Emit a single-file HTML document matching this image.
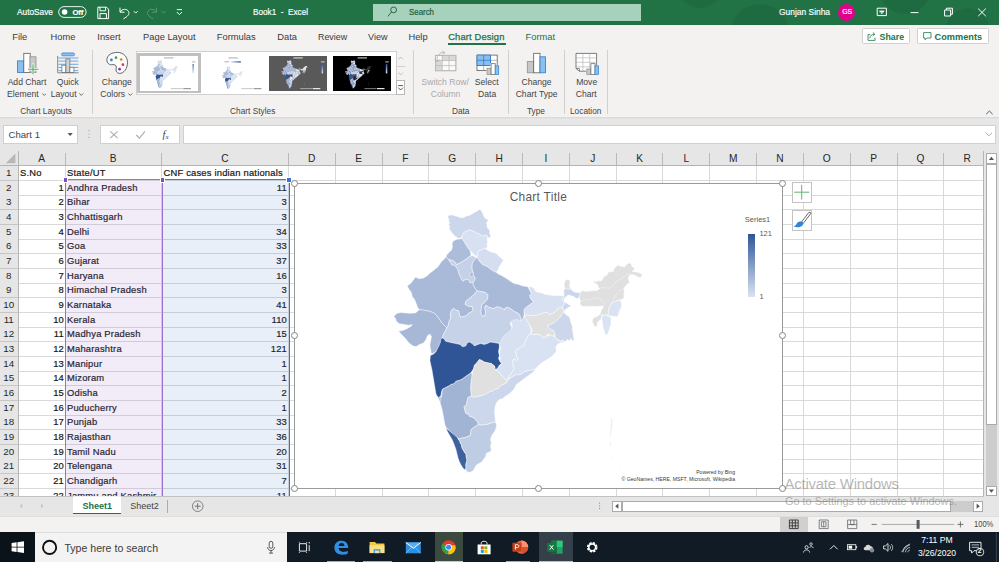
<!DOCTYPE html>
<html><head><meta charset="utf-8"><title>Book1 - Excel</title>
<style>
*{box-sizing:border-box;margin:0;padding:0}
html,body{width:999px;height:562px;overflow:hidden;background:#fff}
body{font-family:"Liberation Sans",sans-serif;position:relative;color:#262626}
.abs{position:absolute}
#title{position:absolute;left:0;top:0;width:999px;height:25px;background:#217346;color:#fff;font-size:9.8px;overflow:hidden}
#title .t{position:absolute;top:6.3px;white-space:nowrap;line-height:12px;-webkit-text-stroke:0.18px currentColor}
.sx{transform-origin:0 50%;transform:scaleX(var(--k,1))}
#tabs{position:absolute;left:0;top:25px;width:999px;height:23px;background:#f3f2f1;font-size:9.35px;color:#3b3a39}
#tabs .t{position:absolute;top:5.7px;white-space:nowrap;line-height:12px}
#ribbon{position:absolute;left:0;top:48px;width:999px;height:69px;background:#f3f2f1;font-size:8.6px;color:#3b3a39}
#ribbon .t{position:absolute;white-space:nowrap;line-height:11.5px;text-align:center}
#ribbon .g{position:absolute;top:53.5px;white-space:nowrap;font-size:8.3px;color:#444;line-height:11px;text-align:center}
#ribbon .sep{position:absolute;top:3px;width:1px;height:62px;background:#d2d0ce}
#rshadow{position:absolute;left:0;top:117px;width:999px;height:4px;background:linear-gradient(#d8d7d6,#e9e8e7 60%,#e6e6e6)}
#fbar{position:absolute;left:0;top:121px;width:999px;height:30px;background:#e6e6e6}
#fbar .box{position:absolute;top:4.3px;height:18.6px;background:#fff;border:0.7px solid #d0d0d0}
#gridbg{position:absolute;left:0;top:151px;width:984px;height:345.4px;background:#fff;overflow:hidden}
#sheet{position:absolute;left:0;top:0;width:999px;height:496.4px;overflow:hidden;pointer-events:none}
.ch{position:absolute;top:151px;height:14.6px;background:#e6e6e6;color:#262626;font-size:10.2px;text-align:center;line-height:16.6px;overflow:hidden}
.chl{position:absolute;top:153px;width:0.8px;height:12px;background:#b9b9b9}
.vl{position:absolute;top:166px;width:0.8px;height:331px;background:#d9d9d9}
.hl{position:absolute;left:18.4px;width:966px;height:0.8px;background:#d9d9d9}
.rh{position:absolute;left:0;width:18.4px;height:14.67px;background:#e6e6e6;color:#262626;font-size:9.8px;text-align:center;line-height:14px;padding-right:1px;letter-spacing:-0.1px}
.rhl{position:absolute;left:0;width:18.4px;height:0.8px;background:#c6c6c6}
.ct{position:absolute;height:14.67px;line-height:14px;font-size:9.4px;color:#111;white-space:nowrap;letter-spacing:0.2px;-webkit-text-stroke:0.2px #222}
.ct.r{text-align:right}
#tabbar{position:absolute;left:0;top:495px;width:999px;height:21px;background:#e6e6e6;clip-path:inset(1.3px 0 0 0)}
#status{position:absolute;left:0;top:516px;width:999px;height:17px;background:#f3f2f1}
#task{position:absolute;left:0;top:533px;width:999px;height:29px;background:#101a24}
</style></head><body>
<div id="title">
 <div class="t sx" style="left:16.8px;--k:.845">AutoSave</div>
 <div class="t sx" style="left:252.6px;--k:.835">Book1&nbsp; -&nbsp; Excel</div>
 <div class="abs" style="left:372.8px;top:4px;width:268.4px;height:17px;background:#a6d1ba"></div>
 <div class="t sx" style="left:409.2px;color:#1d5b3a;--k:.805">Search</div>
 <div class="t sx" style="left:778.7px;--k:.86">Gunjan Sinha</div>
 <div class="abs" style="left:838.1px;top:3.7px;width:17.4px;height:17.4px;border-radius:50%;background:#e3008c"></div>
 <div class="t" style="left:842.3px;top:7.2px;font-size:6.8px;letter-spacing:-.1px;line-height:10px">GS</div>
 <svg class="abs" style="left:0;top:0" width="999" height="25" viewBox="0 0 999 25">
  <g opacity="0.06" fill="#000"><circle cx="760" cy="34" r="30"/><circle cx="905" cy="-12" r="26"/><circle cx="968" cy="30" r="22"/><circle cx="700" cy="-14" r="22"/></g>
  <rect x="58.7" y="6.6" width="27.4" height="10.8" rx="5.4" fill="none" stroke="#fff" stroke-width="0.9"/>
  <circle cx="64.6" cy="12" r="2.8" fill="#fff"/>
  <g fill="none" stroke="#fff" stroke-width="1">
   <path d="M97.8 7.2H106.6L108.6 9.2V18.6H97.8Z"/><path d="M100 7.2V10.8H105.6V7.2"/><path d="M100 18.6V13.6H106.4V18.6"/>
   <path d="M120 7.6V12.2H124.6"/><path d="M120.2 12C122 8.6 127 8.4 128.6 11.6C129.8 14.2 127.6 16.6 123.4 18.8"/>
   <path d="M133.8 11.2L135.7 13.1L137.6 11.2"/>
   <path d="M176.8 9.6H182" stroke-width="0.9"/><path d="M176.8 12L179.4 14.6L182 12"/>
   <path d="M877.2 8.2H886.4V15.6H877.2Z"/><path d="M879.4 11.4H884.2" stroke-width="1.6"/><path d="M880.3 12.6L881.8 14.2L883.3 12.6Z" fill="#fff" stroke="none"/>
   <path d="M910.6 12.6H918.4"/>
   <path d="M944.6 10H950.6V16H944.6Z"/><path d="M946.4 10V8.2H952.4V14.2H950.6"/>
   <path d="M978.2 8.6L985.8 16.2M985.8 8.6L978.2 16.2"/>
  </g>
  <g fill="none" stroke="#5f9c7e" stroke-width="0.9">
   <path d="M156.4 7.6V12.2H151.8"/><path d="M156.2 12C154.4 8.6 149.4 8.4 147.8 11.6C146.6 14.2 148.8 16.6 153 18.8"/>
   <path d="M161.8 11.2L163.7 13.1L165.6 11.2"/>
  </g>
  <circle cx="393.6" cy="9.9" r="2.9" fill="none" stroke="#1d5b3a" stroke-width="0.9"/><path d="M391.6 12L387.8 16.4" stroke="#1d5b3a" stroke-width="0.9"/>
 </svg>
 <div class="t" style="left:72.4px;top:7.5px;font-size:7.7px;font-weight:bold;line-height:9px;letter-spacing:-.15px">Off</div>
</div>
<div id="tabs">
 <div class="t" style="left:12.2px">File</div>
 <div class="t" style="left:50.5px">Home</div>
 <div class="t" style="left:97.3px">Insert</div>
 <div class="t" style="left:143px">Page Layout</div>
 <div class="t" style="left:216.8px">Formulas</div>
 <div class="t" style="left:277.2px">Data</div>
 <div class="t sx" style="left:318.4px;--k:.95">Review</div>
 <div class="t sx" style="left:368px;--k:.97">View</div>
 <div class="t" style="left:408.4px">Help</div>
 <div class="t" style="left:448.2px;color:#217346;letter-spacing:.15px;-webkit-text-stroke:0.25px #217346">Chart Design</div>
 <div class="abs" style="left:448.2px;top:18.2px;width:58px;height:2.1px;background:#217346"></div>
 <div class="t" style="left:525.5px;color:#217346">Format</div>
 <div class="abs" style="left:861.7px;top:2.5px;width:48.8px;height:16.6px;background:#fff;border:0.7px solid #d2d0ce;border-radius:1.5px"></div>
 <div class="t" style="left:879.6px;color:#217346;font-weight:bold;font-size:8.8px">Share</div>
 <div class="abs" style="left:917.4px;top:2.5px;width:72px;height:16.6px;background:#fff;border:0.7px solid #d2d0ce;border-radius:1.5px"></div>
 <div class="t" style="left:934.6px;color:#217346;font-weight:bold;font-size:9.2px">Comments</div>
 <svg class="abs" style="left:0;top:0" width="999" height="23" viewBox="0 25 999 23"><g fill="none" stroke="#217346" stroke-width="0.8">
  <path d="M870.2 34.6H868V40.4H875V37.6"/><path d="M869.8 38.2C870 35.6 872 34.2 874.2 34.2M872.8 32.4L874.8 34.2L872.8 36"/>
  <path d="M923.6 32.6H931V38H927L925 39.8V38H923.6Z"/>
 </g></svg>
</div>
<div id="ribbon">
<div class="t" style="left:-13.0px;top:29.4px;width:80px;color:#444">Add Chart</div>
<div class="t" style="left:-13.4px;top:41.2px;width:80px;color:#444">Element <svg width="4.6" height="3" viewBox="0 0 4.6 3" style="margin-left:0.5px;vertical-align:1.2px"><path d="M0.4 0.5 L2.3 2.4 L4.2 0.5" fill="none" stroke="#444" stroke-width="0.8"/></svg></div>
<div class="t" style="left:27.8px;top:29.4px;width:80px;color:#444">Quick</div>
<div class="t" style="left:27.4px;top:41.2px;width:80px;color:#444">Layout <svg width="4.6" height="3" viewBox="0 0 4.6 3" style="margin-left:0.5px;vertical-align:1.2px"><path d="M0.4 0.5 L2.3 2.4 L4.2 0.5" fill="none" stroke="#444" stroke-width="0.8"/></svg></div>
<div class="t" style="left:76.8px;top:29.4px;width:80px;color:#444">Change</div>
<div class="t" style="left:76.5px;top:41.2px;width:80px;color:#444">Colors <svg width="4.6" height="3" viewBox="0 0 4.6 3" style="margin-left:0.5px;vertical-align:1.2px"><path d="M0.4 0.5 L2.3 2.4 L4.2 0.5" fill="none" stroke="#444" stroke-width="0.8"/></svg></div>
<div class="t" style="left:405.2px;top:29.4px;width:80px;color:#a9a9a9">Switch Row/</div>
<div class="t" style="left:405.6px;top:41.2px;width:80px;color:#a9a9a9">Column</div>
<div class="t" style="left:446.8px;top:29.4px;width:80px;color:#444">Select</div>
<div class="t" style="left:447.2px;top:41.2px;width:80px;color:#444">Data</div>
<div class="t" style="left:496.5px;top:29.4px;width:80px;color:#444">Change</div>
<div class="t" style="left:496.6px;top:41.2px;width:80px;color:#444">Chart Type</div>
<div class="t" style="left:546.7px;top:29.4px;width:80px;color:#444">Move</div>
<div class="t" style="left:546.2px;top:41.2px;width:80px;color:#444">Chart</div>
<div class="g" style="left:6.1px;top:58.4px;width:80px">Chart Layouts</div>
<div class="g" style="left:212.7px;top:58.4px;width:80px">Chart Styles</div>
<div class="g" style="left:420.7px;top:58.4px;width:80px">Data</div>
<div class="g" style="left:496.0px;top:58.4px;width:80px">Type</div>
<div class="g" style="left:545.7px;top:58.4px;width:80px">Location</div>
<div class="sep" style="left:92.1px;top:2.3px;height:63.6px"></div>
<div class="sep" style="left:413.2px;top:2.3px;height:63.6px"></div>
<div class="sep" style="left:507.5px;top:2.3px;height:63.6px"></div>
<div class="sep" style="left:564.3px;top:2.3px;height:63.6px"></div>
<div class="sep" style="left:607.2px;top:2.3px;height:63.6px"></div>
<div class="abs" style="left:136.3px;top:3.3px;width:269px;height:44px;background:#fff;border:0.7px solid #d0d0d0"></div>
<div class="abs" style="left:136.9px;top:5.1px;width:64px;height:40.2px;background:#c0c0c0"></div>
<div class="abs" style="left:139.8px;top:7.9px;width:58.4px;height:35px;background:#fff"></div>
<div class="abs" style="left:269.2px;top:8.3px;width:57.7px;height:34.4px;background:#595959"></div>
<div class="abs" style="left:333.4px;top:8.3px;width:57.7px;height:34.4px;background:#000"></div>
<div class="abs" style="left:395.6px;top:3.3px;width:9.7px;height:44px;background:#f3f2f1;border-left:0.7px solid #d0d0d0"></div>
<div class="abs" style="left:395.6px;top:17.6px;width:9.7px;height:0.7px;background:#d0d0d0"></div>
<div class="abs" style="left:395.6px;top:32.2px;width:9.7px;height:15.1px;background:#fff;border:0.7px solid #b8b8b8"></div>
<svg class="abs" style="left:0;top:0" width="999" height="69" viewBox="0 48 999 69">
<rect x="17.4" y="60.9" width="6.6" height="11.6" fill="#8cc0ec" stroke="#2b7cd3" stroke-width="0.8"/>
<rect x="23.8" y="53.3" width="6.4" height="19.2" fill="#fff" stroke="#5c5c5c" stroke-width="0.8"/>
<rect x="30.0" y="56.8" width="6.0" height="15.7" fill="#c8c8c8" stroke="#8f8f8f" stroke-width="0.8"/>
<path d="M33 63.6V74.4M27.6 69.2H38.6" stroke="#fff" stroke-width="2.4" fill="none"/>
<path d="M33 64.2V74.2M28 69.2H38.5" stroke="#4fa860" stroke-width="1.1" fill="none"/>
<rect x="61.6" y="52.9" width="12.9" height="2.9" rx="1.2" fill="#8cc0ec" stroke="#2b7cd3" stroke-width="0.7"/>
<path d="M58.5 58H78.3M58.5 61.1H78.3M58.5 64.3H78.3M58.5 67.5H78.3M58.5 70.6H78.3" stroke="#4a97e0" stroke-width="0.8"/>
<rect x="61.9" y="65.2" width="4" height="7.4" fill="#fff" stroke="#6a6a6a" stroke-width="0.7"/>
<rect x="65.9" y="58.9" width="4" height="13.7" fill="#d2d2d2" stroke="#6a6a6a" stroke-width="0.7"/>
<rect x="69.9" y="67.2" width="4" height="5.4" fill="#fff" stroke="#6a6a6a" stroke-width="0.7"/>
<path d="M57.7 55.9V72.8H78.6" stroke="#6a6a6a" stroke-width="0.8" fill="none"/>
<path d="M106.9 59.6C107.2 54.8 112 52.4 117.4 52.4C123.6 52.4 127.5 57 127.5 62.4C127.5 68.8 123.8 73.4 119.6 73.4C116.6 73.4 115.6 71 116.2 68.8C116.9 66.2 115.4 64.2 112.8 64.6C109.6 65.2 106.7 63.4 106.9 59.6Z" fill="#fcfcfc" stroke="#4b4b4b" stroke-width="0.85"/>
<circle cx="111.4" cy="59.9" r="1.35" fill="#2f7fd6"/>
<circle cx="116" cy="57.7" r="1.35" fill="#3aa655"/>
<circle cx="121.2" cy="59.5" r="1.35" fill="#f07c1a"/>
<circle cx="122.9" cy="64.7" r="1.35" fill="#e23b3b"/>
<circle cx="119.6" cy="69.2" r="1.35" fill="#8b2fb8"/>
<rect x="435.4" y="55.3" width="20.5" height="15.5" fill="#fafafa" stroke="#b5b5b5" stroke-width="0.7"/>
<rect x="435.4" y="60.5" width="6.8" height="10.3" fill="#d9d9d9"/><rect x="442.2" y="55.3" width="13.7" height="5.2" fill="#d9d9d9"/>
<path d="M442.2 55.3V70.8M449 55.3V70.8M435.4 60.5H455.9M435.4 65.6H455.9" stroke="#b5b5b5" stroke-width="0.7" fill="none"/>
<rect x="435.4" y="55.3" width="20.5" height="15.5" fill="none" stroke="#b0b0b0" stroke-width="0.7"/>
<path d="M437.2 61.8V57.2M434.6 59.4L437.2 62L439.8 59.4M437.2 57.2L440.8 52.6H444.6M442.6 50.6L444.8 52.6L442.6 54.8" stroke="#b0b0b0" stroke-width="0.8" fill="none"/>
<rect x="477" y="55.1" width="20.2" height="15.5" fill="#fff" stroke="#5c5c5c" stroke-width="0.8"/>
<rect x="477" y="55.1" width="13.5" height="10.4" fill="#8cc0ec"/>
<path d="M483.7 55.1V65.5M490.5 55.1V65.5M477 60.3H490.5M477 65.5H490.5" stroke="#2b7cd3" stroke-width="0.8" fill="none"/>
<path d="M477 55.1H490.5V65.5H477Z" stroke="#2b7cd3" stroke-width="0.8" fill="none"/>
<path d="M490.5 60.3H497.2M483.7 65.5V70.6" stroke="#8a8a8a" stroke-width="0.6" fill="none"/>
<path d="M486.2 67.4H490.3V62.9H496V65H499.5V75.2H486.2Z" fill="#f3f2f1"/>
<rect x="487" y="68.2" width="4.1" height="6.2" fill="#c8c8c8" stroke="#8f8f8f" stroke-width="0.7"/>
<rect x="491.1" y="63.7" width="4.1" height="10.7" fill="#fff" stroke="#5c5c5c" stroke-width="0.7"/>
<rect x="495.2" y="65.8" width="3.5" height="8.6" fill="#8cc0ec" stroke="#2b7cd3" stroke-width="0.7"/>
<rect x="527.3" y="61.6" width="6.4" height="11.2" fill="#c8c8c8" stroke="#8f8f8f" stroke-width="0.8"/>
<rect x="533.7" y="53.3" width="6.3" height="19.5" fill="#fff" stroke="#5c5c5c" stroke-width="0.8"/>
<rect x="540" y="56.8" width="5.6" height="16" fill="#8cc0ec" stroke="#2b7cd3" stroke-width="0.8"/>
<path d="M576 53.4H596.6V71.2H579.4L576 68.4Z" fill="#fff" stroke="#5c5c5c" stroke-width="0.8"/>
<path d="M582.9 53.4V71.2M589.7 53.4V71.2M576 57.9H596.6M576 62.3H596.6M576 66.8H596.6" stroke="#ababab" stroke-width="0.6" fill="none"/>
<path d="M576 68.4H579.4V71.2" stroke="#5c5c5c" stroke-width="0.7" fill="none"/>
<path d="M586 68.2H590.1V62.9H595.8V65H599.3V75.2H586Z" fill="#f3f2f1"/>
<rect x="586.8" y="69" width="4.1" height="5.4" fill="#c8c8c8" stroke="#8f8f8f" stroke-width="0.7"/>
<rect x="590.9" y="63.7" width="4.1" height="10.7" fill="#fff" stroke="#5c5c5c" stroke-width="0.7"/>
<rect x="595" y="65.8" width="3.5" height="8.6" fill="#8cc0ec" stroke="#2b7cd3" stroke-width="0.7"/>
<path d="M398.4 59.4L400.6 57.2L402.8 59.4" stroke="#b0b0b0" stroke-width="0.8" fill="none"/>
<path d="M398.4 72.6L400.6 74.8L402.8 72.6" stroke="#b0b0b0" stroke-width="0.8" fill="none"/>
<path d="M398.2 85.6H403M398.2 87.6L400.6 90L403 87.6" stroke="#444" stroke-width="0.9" fill="none"/>
<path d="M986.2 114.2L989.4 111L992.6 114.2" stroke="#444" stroke-width="0.9" fill="none"/>
<g transform="translate(151.70,60.10) scale(0.1075) translate(-393,-209)" ><use href="#india"/></g>
<g transform="translate(221.80,66.40) scale(0.086) translate(-393,-209)" ><use href="#india"/></g>
<g transform="translate(281.10,60.10) scale(0.1075) translate(-393,-209)" style="--g:#e8e4da;--s:#e8e8e8"><use href="#india"/></g>
<g transform="translate(344.90,60.10) scale(0.1075) translate(-393,-209)" style="--g:#2a2a2a;--s:#ddd"><use href="#india"/></g>
<rect x="164.0" y="57.3" width="9.4" height="1.2" fill="#b9b9b9"/>
<rect x="170.8" y="88.2" width="12" height="0.9" fill="#9a9a9a" opacity="0.6"/><rect x="183.3" y="88" width="7.6" height="1.2" fill="#9a9a9a"/>
<rect x="228.5" y="57.3" width="9.4" height="1.2" fill="#b9b9b9"/>
<rect x="241.3" y="88.2" width="12" height="0.9" fill="#9a9a9a" opacity="0.6"/><rect x="253.8" y="88" width="7.6" height="1.2" fill="#9a9a9a"/>
<rect x="293.4" y="57.3" width="9.4" height="1.2" fill="#cfcfcf"/>
<rect x="300.2" y="88.2" width="12" height="0.9" fill="#e8e8e8" opacity="0.6"/><rect x="312.7" y="88" width="7.6" height="1.2" fill="#e8e8e8"/>
<rect x="357.6" y="57.3" width="9.4" height="1.2" fill="#bdbdbd"/>
<rect x="364.4" y="88.2" width="12" height="0.9" fill="#e8e8e8" opacity="0.6"/><rect x="376.9" y="88" width="7.6" height="1.2" fill="#e8e8e8"/>
<defs><linearGradient id="lg" x1="0" y1="0" x2="0" y2="1"><stop offset="0" stop-color="#2f5597"/><stop offset="1" stop-color="#dae3f3"/></linearGradient><linearGradient id="lgh" x1="0" y1="0" x2="1" y2="0"><stop offset="0" stop-color="#dae3f3"/><stop offset="1" stop-color="#2f5597"/></linearGradient></defs>
<rect x="192.4" y="64" width="1.5" height="9.4" fill="url(#lg)" opacity="0.75"/><rect x="191.8" y="61.4" width="3.6" height="1" fill="#b0b0b0"/>
<rect x="231" y="61.2" width="9.8" height="1.4" fill="url(#lgh)"/><rect x="224.5" y="61.3" width="4.6" height="1" fill="#b0b0b0"/>
<rect x="321.6" y="64" width="1.5" height="9.4" fill="url(#lg)"/><rect x="321" y="61.4" width="3.6" height="1" fill="#d8d8d8"/>
<rect x="385.8" y="64" width="1.5" height="9.4" fill="url(#lg)"/><rect x="385.2" y="61.4" width="3.6" height="1" fill="#bdbdbd"/>
</svg>
</div>
<div id="rshadow"></div>
<div id="fbar">
 <div class="box" style="left:3px;width:75px"></div>
 <div class="abs" style="left:8.5px;top:8px;font-size:9.6px;line-height:12px;color:#444">Chart 1</div>
 <div class="box" style="left:100px;width:80px"></div>
 <div class="box" style="left:182.5px;width:813px"></div>
<svg class="abs" style="left:0;top:0" width="999" height="30" viewBox="0 121 999 30">
<path d="M67.6 133L70.2 136L72.8 133Z" fill="#555"/>
<circle cx="89" cy="130.6" r="0.6" fill="#9a9a9a"/><circle cx="89" cy="134" r="0.6" fill="#9a9a9a"/><circle cx="89" cy="137.4" r="0.6" fill="#9a9a9a"/>
<path d="M110.3 131.3L117.6 138.2M117.6 131.3L110.3 138.2" stroke="#adadad" stroke-width="1.1" fill="none"/>
<path d="M136.2 135L139.4 138.2L144.9 131.3" stroke="#adadad" stroke-width="1.1" fill="none"/>
<path d="M985.8 132.8L988.9 135.8L992 132.8" stroke="#9a9a9a" stroke-width="0.8" fill="none"/>
</svg>
<div class="abs" style="left:162.5px;top:6.5px;font-family:'Liberation Serif',serif;font-style:italic;font-size:10.5px;line-height:13px;color:#444">f<span style="font-size:7px;vertical-align:-1px">x</span></div>
</div>
<div id="gridbg"></div>
<div id="sheet">
 <div class="abs" style="left:0;top:151px;width:984px;height:15px;background:#e6e6e6"></div>
<div class="ch" style="left:18.40px;width:46.60px">A</div>
<div class="ch" style="left:65.00px;width:96.50px">B</div>
<div class="ch" style="left:161.50px;width:126.90px">C</div>
<div class="ch" style="left:288.40px;width:46.82px">D</div>
<div class="ch" style="left:335.22px;width:46.82px">E</div>
<div class="ch" style="left:382.04px;width:46.82px">F</div>
<div class="ch" style="left:428.86px;width:46.82px">G</div>
<div class="ch" style="left:475.68px;width:46.82px">H</div>
<div class="ch" style="left:522.50px;width:46.82px">I</div>
<div class="ch" style="left:569.32px;width:46.82px">J</div>
<div class="ch" style="left:616.14px;width:46.82px">K</div>
<div class="ch" style="left:662.96px;width:46.82px">L</div>
<div class="ch" style="left:709.78px;width:46.82px">M</div>
<div class="ch" style="left:756.60px;width:46.82px">N</div>
<div class="ch" style="left:803.42px;width:46.82px">O</div>
<div class="ch" style="left:850.24px;width:46.82px">P</div>
<div class="ch" style="left:897.06px;width:46.82px">Q</div>
<div class="ch" style="left:943.88px;width:46.82px">R</div>
<div class="chl" style="left:64.50px"></div>
<div class="chl" style="left:161.00px"></div>
<div class="chl" style="left:287.90px"></div>
<div class="chl" style="left:334.72px"></div>
<div class="chl" style="left:381.54px"></div>
<div class="chl" style="left:428.36px"></div>
<div class="chl" style="left:475.18px"></div>
<div class="chl" style="left:522.00px"></div>
<div class="chl" style="left:568.82px"></div>
<div class="chl" style="left:615.64px"></div>
<div class="chl" style="left:662.46px"></div>
<div class="chl" style="left:709.28px"></div>
<div class="chl" style="left:756.10px"></div>
<div class="chl" style="left:802.92px"></div>
<div class="chl" style="left:849.74px"></div>
<div class="chl" style="left:896.56px"></div>
<div class="chl" style="left:943.38px"></div>
<div class="chl" style="left:990.20px"></div>
<svg class="abs" style="left:0;top:151px" width="18" height="15" viewBox="0 151 18 15"><path d="M15.4 153.6V163.2H5.8Z" fill="#b8b8b8"/></svg>
<div class="vl" style="left:64.50px"></div>
<div class="vl" style="left:161.00px"></div>
<div class="vl" style="left:287.90px"></div>
<div class="vl" style="left:334.72px"></div>
<div class="vl" style="left:381.54px"></div>
<div class="vl" style="left:428.36px"></div>
<div class="vl" style="left:475.18px"></div>
<div class="vl" style="left:522.00px"></div>
<div class="vl" style="left:568.82px"></div>
<div class="vl" style="left:615.64px"></div>
<div class="vl" style="left:662.46px"></div>
<div class="vl" style="left:709.28px"></div>
<div class="vl" style="left:756.10px"></div>
<div class="vl" style="left:802.92px"></div>
<div class="vl" style="left:849.74px"></div>
<div class="vl" style="left:896.56px"></div>
<div class="vl" style="left:943.38px"></div>
<div class="vl" style="left:990.20px"></div>
<div class="rh" style="top:166.00px">1</div>
<div class="hl" style="top:179.87px"></div>
<div class="rhl" style="top:179.87px"></div>
<div class="ct" style="top:166.00px;left:20px">S.No</div>
<div class="ct" style="top:166.00px;left:67px">State/UT</div>
<div class="ct" style="top:166.00px;left:163.5px">CNF cases indian nationals</div>
<div class="rh" style="top:180.67px">2</div>
<div class="hl" style="top:194.53px"></div>
<div class="rhl" style="top:194.53px"></div>
<div class="ct r" style="top:180.67px;left:18.4px;width:45.6px">1</div>
<div class="ct" style="top:180.67px;left:67px">Andhra Pradesh</div>
<div class="ct r" style="top:180.67px;left:161.5px;width:125.5px">11</div>
<div class="rh" style="top:195.33px">3</div>
<div class="hl" style="top:209.20px"></div>
<div class="rhl" style="top:209.20px"></div>
<div class="ct r" style="top:195.33px;left:18.4px;width:45.6px">2</div>
<div class="ct" style="top:195.33px;left:67px">Bihar</div>
<div class="ct r" style="top:195.33px;left:161.5px;width:125.5px">3</div>
<div class="rh" style="top:210.00px">4</div>
<div class="hl" style="top:223.87px"></div>
<div class="rhl" style="top:223.87px"></div>
<div class="ct r" style="top:210.00px;left:18.4px;width:45.6px">3</div>
<div class="ct" style="top:210.00px;left:67px">Chhattisgarh</div>
<div class="ct r" style="top:210.00px;left:161.5px;width:125.5px">3</div>
<div class="rh" style="top:224.67px">5</div>
<div class="hl" style="top:238.53px"></div>
<div class="rhl" style="top:238.53px"></div>
<div class="ct r" style="top:224.67px;left:18.4px;width:45.6px">4</div>
<div class="ct" style="top:224.67px;left:67px">Delhi</div>
<div class="ct r" style="top:224.67px;left:161.5px;width:125.5px">34</div>
<div class="rh" style="top:239.33px">6</div>
<div class="hl" style="top:253.20px"></div>
<div class="rhl" style="top:253.20px"></div>
<div class="ct r" style="top:239.33px;left:18.4px;width:45.6px">5</div>
<div class="ct" style="top:239.33px;left:67px">Goa</div>
<div class="ct r" style="top:239.33px;left:161.5px;width:125.5px">33</div>
<div class="rh" style="top:254.00px">7</div>
<div class="hl" style="top:267.87px"></div>
<div class="rhl" style="top:267.87px"></div>
<div class="ct r" style="top:254.00px;left:18.4px;width:45.6px">6</div>
<div class="ct" style="top:254.00px;left:67px">Gujarat</div>
<div class="ct r" style="top:254.00px;left:161.5px;width:125.5px">37</div>
<div class="rh" style="top:268.67px">8</div>
<div class="hl" style="top:282.54px"></div>
<div class="rhl" style="top:282.54px"></div>
<div class="ct r" style="top:268.67px;left:18.4px;width:45.6px">7</div>
<div class="ct" style="top:268.67px;left:67px">Haryana</div>
<div class="ct r" style="top:268.67px;left:161.5px;width:125.5px">16</div>
<div class="rh" style="top:283.34px">9</div>
<div class="hl" style="top:297.20px"></div>
<div class="rhl" style="top:297.20px"></div>
<div class="ct r" style="top:283.34px;left:18.4px;width:45.6px">8</div>
<div class="ct" style="top:283.34px;left:67px">Himachal Pradesh</div>
<div class="ct r" style="top:283.34px;left:161.5px;width:125.5px">3</div>
<div class="rh" style="top:298.00px">10</div>
<div class="hl" style="top:311.87px"></div>
<div class="rhl" style="top:311.87px"></div>
<div class="ct r" style="top:298.00px;left:18.4px;width:45.6px">9</div>
<div class="ct" style="top:298.00px;left:67px">Karnataka</div>
<div class="ct r" style="top:298.00px;left:161.5px;width:125.5px">41</div>
<div class="rh" style="top:312.67px">11</div>
<div class="hl" style="top:326.54px"></div>
<div class="rhl" style="top:326.54px"></div>
<div class="ct r" style="top:312.67px;left:18.4px;width:45.6px">10</div>
<div class="ct" style="top:312.67px;left:67px">Kerala</div>
<div class="ct r" style="top:312.67px;left:161.5px;width:125.5px">110</div>
<div class="rh" style="top:327.34px">12</div>
<div class="hl" style="top:341.20px"></div>
<div class="rhl" style="top:341.20px"></div>
<div class="ct r" style="top:327.34px;left:18.4px;width:45.6px">11</div>
<div class="ct" style="top:327.34px;left:67px">Madhya Pradesh</div>
<div class="ct r" style="top:327.34px;left:161.5px;width:125.5px">15</div>
<div class="rh" style="top:342.00px">13</div>
<div class="hl" style="top:355.87px"></div>
<div class="rhl" style="top:355.87px"></div>
<div class="ct r" style="top:342.00px;left:18.4px;width:45.6px">12</div>
<div class="ct" style="top:342.00px;left:67px">Maharashtra</div>
<div class="ct r" style="top:342.00px;left:161.5px;width:125.5px">121</div>
<div class="rh" style="top:356.67px">14</div>
<div class="hl" style="top:370.54px"></div>
<div class="rhl" style="top:370.54px"></div>
<div class="ct r" style="top:356.67px;left:18.4px;width:45.6px">13</div>
<div class="ct" style="top:356.67px;left:67px">Manipur</div>
<div class="ct r" style="top:356.67px;left:161.5px;width:125.5px">1</div>
<div class="rh" style="top:371.34px">15</div>
<div class="hl" style="top:385.20px"></div>
<div class="rhl" style="top:385.20px"></div>
<div class="ct r" style="top:371.34px;left:18.4px;width:45.6px">14</div>
<div class="ct" style="top:371.34px;left:67px">Mizoram</div>
<div class="ct r" style="top:371.34px;left:161.5px;width:125.5px">1</div>
<div class="rh" style="top:386.00px">16</div>
<div class="hl" style="top:399.87px"></div>
<div class="rhl" style="top:399.87px"></div>
<div class="ct r" style="top:386.00px;left:18.4px;width:45.6px">15</div>
<div class="ct" style="top:386.00px;left:67px">Odisha</div>
<div class="ct r" style="top:386.00px;left:161.5px;width:125.5px">2</div>
<div class="rh" style="top:400.67px">17</div>
<div class="hl" style="top:414.54px"></div>
<div class="rhl" style="top:414.54px"></div>
<div class="ct r" style="top:400.67px;left:18.4px;width:45.6px">16</div>
<div class="ct" style="top:400.67px;left:67px">Puducherry</div>
<div class="ct r" style="top:400.67px;left:161.5px;width:125.5px">1</div>
<div class="rh" style="top:415.34px">18</div>
<div class="hl" style="top:429.21px"></div>
<div class="rhl" style="top:429.21px"></div>
<div class="ct r" style="top:415.34px;left:18.4px;width:45.6px">17</div>
<div class="ct" style="top:415.34px;left:67px">Punjab</div>
<div class="ct r" style="top:415.34px;left:161.5px;width:125.5px">33</div>
<div class="rh" style="top:430.01px">19</div>
<div class="hl" style="top:443.87px"></div>
<div class="rhl" style="top:443.87px"></div>
<div class="ct r" style="top:430.01px;left:18.4px;width:45.6px">18</div>
<div class="ct" style="top:430.01px;left:67px">Rajasthan</div>
<div class="ct r" style="top:430.01px;left:161.5px;width:125.5px">36</div>
<div class="rh" style="top:444.67px">20</div>
<div class="hl" style="top:458.54px"></div>
<div class="rhl" style="top:458.54px"></div>
<div class="ct r" style="top:444.67px;left:18.4px;width:45.6px">19</div>
<div class="ct" style="top:444.67px;left:67px">Tamil Nadu</div>
<div class="ct r" style="top:444.67px;left:161.5px;width:125.5px">20</div>
<div class="rh" style="top:459.34px">21</div>
<div class="hl" style="top:473.21px"></div>
<div class="rhl" style="top:473.21px"></div>
<div class="ct r" style="top:459.34px;left:18.4px;width:45.6px">20</div>
<div class="ct" style="top:459.34px;left:67px">Telengana</div>
<div class="ct r" style="top:459.34px;left:161.5px;width:125.5px">31</div>
<div class="rh" style="top:474.01px">22</div>
<div class="hl" style="top:487.87px"></div>
<div class="rhl" style="top:487.87px"></div>
<div class="ct r" style="top:474.01px;left:18.4px;width:45.6px">21</div>
<div class="ct" style="top:474.01px;left:67px">Chandigarh</div>
<div class="ct r" style="top:474.01px;left:161.5px;width:125.5px">7</div>
<div class="rh" style="top:488.67px">23</div>
<div class="hl" style="top:502.54px"></div>
<div class="rhl" style="top:502.54px"></div>
<div class="ct r" style="top:488.67px;left:18.4px;width:45.6px">22</div>
<div class="ct" style="top:488.67px;left:67px">Jammu and Kashmir</div>
<div class="ct r" style="top:488.67px;left:161.5px;width:125.5px">11</div>
 <div class="abs" style="left:0;top:165.2px;width:984px;height:0.8px;background:#b4b4b4"></div>
 <div class="abs" style="left:17.9px;top:151px;width:0.8px;height:346px;background:#b4b4b4"></div>
<div class="abs" style="left:64.8px;top:179.3px;width:98.4px;height:322px;background:rgba(150,110,200,0.13);border:1.5px solid #9a6fd0"></div>
<div class="abs" style="left:163.3px;top:179.3px;width:126.7px;height:322px;background:rgba(70,120,200,0.12);border-top:1.5px solid #4a78d0;border-right:1.7px solid #3f6fd0"></div>
<div class="abs" style="left:63.8px;top:178.3px;width:3.4px;height:3.4px;background:#7a52b8;outline:0.6px solid #fff"></div>
<div class="abs" style="left:160.7px;top:178.3px;width:3.4px;height:3.4px;background:#7a52b8;outline:0.6px solid #fff"></div>
<div class="abs" style="left:287.3px;top:178.3px;width:3.4px;height:3.4px;background:#3f6fc6;outline:0.6px solid #fff"></div>
<div class="abs" style="left:294.0px;top:182.9px;width:488.70000000000005px;height:305.70000000000005px;background:#fff;border:0.8px solid #9a9a9a"></div>
<svg class="abs" style="left:0;top:0" width="999" height="562" viewBox="0 0 999 562">
<g id="india"><g stroke-width="0.45" stroke-linejoin="round" style="stroke:var(--s,#fff)">
<polygon fill="#ccd7eb" points="448.2,215.4 450.2,215.0 452.2,215.0 454.6,215.8 457.0,216.2 459.4,217.4 462.2,217.8 464.6,217.0 467.0,215.8 469.4,215.4 471.4,214.2 473.4,213.0 475.8,211.8 478.2,210.2 479.8,209.4 481.0,210.2 482.2,212.2 483.0,214.2 483.8,216.2 485.1,218.2 486.7,219.0 488.3,219.8 487.5,221.4 486.3,223.0 487.1,225.0 487.1,227.0 488.3,229.0 489.9,230.6 489.5,232.6 490.3,234.6 490.7,236.6 489.5,237.8 487.9,237.4 487.1,235.8 485.5,235.4 483.4,236.2 481.8,235.8 480.2,234.6 478.2,233.4 476.6,233.0 474.6,231.8 472.6,231.0 470.2,230.0 468.2,230.2 465.8,231.4 463.8,232.6 462.6,234.6 462.2,236.6 460.6,237.8 459.0,238.6 457.4,237.8 455.8,236.6 454.2,235.8 453.0,233.8 451.4,232.2 450.2,230.2 449.0,228.6 449.8,226.6 448.6,224.6 449.8,223.0 448.6,221.0 449.0,219.0 447.8,217.4"/>
<polygon fill="#d7e1f1" points="462.2,236.6 462.6,234.6 463.8,232.6 465.8,231.4 468.2,230.2 470.2,230.0 472.6,231.0 474.6,231.8 476.6,233.0 478.2,233.4 480.2,234.6 481.8,235.8 483.4,236.2 485.5,235.4 487.1,235.8 487.5,237.4 487.1,239.4 487.5,241.8 487.1,244.2 487.5,246.6 486.3,248.6 485.3,248.3 481.3,249.9 478.9,250.7 477.7,253.1 477.3,256.3 474.9,255.5 472.5,253.1 470.1,250.7 467.6,247.5 465.6,244.3 463.6,241.0 461.7,238.6"/>
<polygon fill="#acbdda" points="453.2,241.0 456.4,239.4 459.6,239.0 461.7,238.6 463.6,241.0 465.6,244.3 467.6,247.5 470.1,250.7 471.0,254.8 470.0,256.4 467.2,258.4 464.4,260.4 460.4,262.8 456.8,264.8 454.8,262.0 452.4,260.4 450.0,260.0 448.8,259.5 447.6,258.7 446.0,257.1 446.8,254.7 449.2,252.3 451.6,249.9 452.4,246.7 452.1,243.5"/>
<polygon fill="#d4def0" points="477.7,253.1 478.9,250.7 481.3,249.9 485.3,248.3 488.0,250.7 491.7,252.3 495.7,253.1 498.9,256.3 502.1,258.7 503.4,260.3 501.3,263.5 499.2,266.7 498.1,269.9 496.0,272.3 493.3,271.0 490.1,269.1 487.4,266.7 484.5,265.6 482.1,264.3 480.0,261.9 478.1,259.5 477.3,256.3"/>
<polygon fill="#c5d1e8" points="448.8,259.5 450.0,260.0 452.4,260.4 454.8,262.0 456.8,264.8 460.4,262.8 464.4,260.4 467.2,258.4 470.0,256.4 472.4,255.6 474.8,256.8 476.4,258.0 474.0,260.4 472.4,263.6 472.0,266.8 472.3,270.0 473.2,272.4 473.6,275.6 474.4,276.4 475.2,278.0 474.8,280.4 473.2,282.1 471.2,282.5 470.0,282.9 469.2,281.2 468.0,279.2 466.4,279.6 464.8,280.0 462.8,281.2 461.6,279.6 460.8,277.6 459.6,275.6 458.8,273.2 458.0,270.4 457.2,268.4 455.6,266.4 453.6,265.2 451.6,264.8 450.8,262.8 449.2,261.2"/>
<polygon fill="#abbcda" points="471.6,272.0 473.2,273.6 473.6,275.6 472.0,276.8 470.0,276.0 469.6,274.0 470.4,272.4"/>
<polygon fill="#a8bad8" points="476.5,257.9 477.3,256.3 478.1,259.5 480.0,261.9 482.1,264.3 484.5,265.6 487.4,266.7 490.1,269.1 493.3,271.0 496.0,272.3 498.9,274.2 502.9,276.3 506.9,278.7 510.9,281.6 514.1,283.5 518.1,284.3 522.9,285.9 527.7,286.7 530.1,288.3 527.6,286.4 529.3,289.6 531.7,293.6 530.1,297.6 532.5,300.9 534.9,302.5 531.7,303.3 528.5,305.7 526.0,308.1 524.4,311.3 524.0,315.3 522.8,320.1 521.2,320.6 520.4,317.7 519.6,314.5 517.2,312.9 514.0,311.3 510.8,308.9 507.6,307.3 505.2,308.1 505.0,310.1 500.4,307.6 497.1,306.8 493.9,308.5 489.1,307.6 485.9,305.2 484.7,307.6 485.6,311.7 485.1,315.7 482.7,316.5 480.8,313.3 481.1,308.5 481.9,304.4 485.1,302.0 487.5,298.8 487.9,294.8 485.1,292.4 481.1,291.6 477.1,290.8 475.6,289.7 474.8,287.7 473.6,286.1 472.8,284.1 473.2,282.1 474.8,280.4 475.2,278.0 474.4,276.4 473.6,275.6 473.2,272.4 472.3,270.0 472.0,266.8 472.4,263.6 474.0,260.4 476.4,258.0"/>
<polygon fill="#a8bad8" points="407.1,286.0 410.6,283.6 413.0,280.4 415.4,277.2 419.4,278.8 423.5,278.0 427.5,275.6 430.7,272.4 433.2,270.7 438.0,266.7 441.2,261.9 443.6,259.8 446.0,257.1 447.6,258.7 448.8,259.5 449.2,261.2 450.8,262.8 451.6,264.8 453.6,265.2 455.6,266.4 457.2,268.4 458.0,270.4 458.8,273.2 459.6,275.6 460.8,277.6 461.6,279.6 462.8,281.2 464.8,280.0 466.4,279.6 468.0,279.2 469.2,281.2 470.0,282.9 471.2,282.5 473.2,282.1 472.8,284.1 473.6,286.1 474.8,287.7 475.6,289.7 477.1,290.8 474.7,294.0 469.9,298.0 465.9,301.2 465.1,304.4 468.3,306.0 472.3,306.8 473.1,310.1 470.7,312.5 468.3,313.3 466.7,315.7 463.5,316.5 460.3,317.3 459.5,314.9 458.7,310.9 455.5,310.1 453.9,308.5 451.5,310.1 450.4,314.1 450.7,318.1 449.1,321.3 448.3,325.3 446.7,327.7 444.3,325.3 441.1,322.1 438.7,318.1 436.3,314.9 433.1,312.5 428.3,310.9 423.5,310.1 419.4,309.7 417.8,307.6 416.2,303.6 414.6,299.6 412.2,296.4 411.4,292.4 409.0,289.2"/>
<polygon fill="#a7b8d7" points="393.8,316.5 397.0,313.3 401.0,312.5 405.8,312.9 410.6,313.3 415.4,312.9 419.4,309.7 423.5,310.1 428.3,310.9 433.1,312.5 436.3,314.9 438.7,318.1 441.1,322.1 444.3,325.3 446.7,327.7 445.6,330.9 443.5,334.1 442.7,337.3 443.5,340.5 441.1,342.1 440.3,345.3 438.7,348.5 436.3,350.9 433.1,353.3 431.5,354.1 430.7,350.1 429.9,345.3 430.7,340.5 431.5,336.5 429.9,334.1 427.5,335.7 425.9,339.7 423.5,342.9 419.4,344.5 416.2,346.6 413.0,346.1 409.0,342.9 405.0,338.1 401.0,334.1 398.6,330.9 402.6,330.6 407.4,328.5 411.4,326.1 412.2,324.5 409.0,325.3 404.2,324.5 399.4,323.7 396.2,321.3 395.4,318.1"/>
<polygon fill="#c6d2e8" points="446.7,327.7 448.3,325.3 449.1,321.3 450.7,318.1 450.4,314.1 451.5,310.1 453.9,308.5 455.5,310.1 458.7,310.9 459.5,314.9 460.3,317.3 463.5,316.5 466.7,315.7 468.3,313.3 470.7,312.5 473.1,310.1 472.3,306.8 468.3,306.0 465.1,304.4 465.9,301.2 469.9,298.0 474.7,294.0 477.1,290.8 481.1,291.6 485.1,292.4 487.9,294.8 487.5,298.8 485.1,302.0 481.9,304.4 481.1,308.5 480.8,313.3 482.7,316.5 485.1,315.7 485.6,311.7 484.7,307.6 485.9,305.2 489.1,307.6 493.9,308.5 497.1,306.8 500.4,307.6 505.0,310.1 505.2,308.1 507.6,307.3 510.8,308.9 514.0,311.3 517.2,312.9 519.6,314.5 520.4,317.7 521.2,320.6 518.8,321.7 515.6,320.9 512.4,321.7 510.0,323.3 511.6,326.5 512.4,329.7 510.8,332.9 507.6,335.3 504.4,337.7 502.0,340.1 501.2,343.3 499.9,343.3 499.3,343.6 495.3,342.8 490.5,342.0 487.3,343.6 484.1,344.4 480.9,343.6 477.7,344.4 474.5,346.0 472.1,343.6 469.7,342.0 467.3,342.8 465.7,346.0 462.5,346.8 460.1,344.4 456.0,343.6 452.0,342.8 448.8,342.0 445.6,341.2 444.0,338.8 442.4,338.0 443.5,340.5 442.7,337.3 443.5,334.1 445.6,330.9"/>
<polygon fill="#2f5597" points="442.4,338.0 444.0,338.8 445.6,341.2 448.8,342.0 452.0,342.8 456.0,343.6 460.1,344.4 462.5,346.8 465.7,346.0 467.3,342.8 469.7,342.0 472.1,343.6 474.5,346.0 477.7,344.4 480.9,343.6 484.1,344.4 487.3,343.6 490.5,342.0 495.3,342.8 499.3,343.6 499.3,347.6 498.5,351.6 499.3,355.6 498.5,358.8 500.1,361.2 501.7,363.6 499.3,365.2 497.7,368.5 495.3,370.1 494.5,366.0 491.3,363.6 487.3,362.8 484.1,362.0 481.7,360.4 479.3,359.6 476.9,362.8 474.5,365.2 473.7,368.5 472.1,370.9 470.5,373.3 468.1,374.9 465.7,376.5 462.5,378.9 459.3,380.5 456.0,381.3 454.4,383.7 451.2,384.5 448.8,386.1 445.6,387.7 442.4,389.3 441.6,391.7 440.8,395.7 438.4,398.1 436.0,394.1 435.2,389.3 434.4,384.5 433.6,379.7 432.8,374.9 432.0,370.1 430.9,365.2 429.9,360.4 430.4,355.6 433.6,354.0 436.0,351.6 437.6,348.4 439.2,345.2 440.5,342.0 440.8,339.3"/>
<polygon fill="#acbdda" points="438.4,398.0 440.8,396.1 441.6,398.8 440.8,402.0 439.5,401.2"/>
<polygon style="fill:var(--g,#e0e0e0)" points="479.3,359.6 481.7,360.4 484.1,362.0 487.3,362.8 491.3,363.6 494.5,366.0 495.3,370.1 497.7,370.9 500.1,373.3 502.5,376.5 504.9,378.9 507.8,380.9 506.5,382.9 503.3,384.5 500.1,386.1 498.5,388.5 495.3,389.3 492.9,390.9 489.7,391.7 487.3,393.3 484.1,394.9 480.9,395.7 477.7,396.5 474.5,397.3 471.3,396.5 470.9,392.5 470.5,387.7 470.9,382.9 471.6,378.1 472.1,373.3 473.7,368.5 474.5,365.2 476.9,362.8"/>
<polygon fill="#a1b4d4" points="442.4,389.3 445.6,387.7 448.8,386.1 451.2,384.5 454.4,383.7 456.0,381.3 459.3,380.5 462.5,378.9 465.7,376.5 468.1,374.9 470.5,373.3 472.1,373.3 471.6,378.1 470.9,382.9 470.5,387.7 470.9,392.5 471.3,396.5 468.1,397.2 467.3,400.4 466.5,404.4 464.1,406.8 464.9,410.0 465.7,413.2 468.1,414.0 469.7,416.4 472.9,417.2 475.3,419.6 477.7,422.0 478.5,424.4 476.1,426.0 473.7,427.6 471.3,429.3 470.5,432.5 470.9,434.9 468.1,436.5 464.9,437.7 461.7,438.1 459.3,438.9 457.6,438.1 456.0,436.5 453.6,434.9 451.2,432.5 448.8,430.1 447.2,428.5 446.1,427.6 444.8,424.4 444.0,419.6 443.2,415.6 442.4,410.8 441.1,406.0 440.0,402.0 440.8,398.8 441.6,396.1"/>
<polygon fill="#3f629f" points="446.2,428.2 448.2,429.8 450.6,431.8 453.0,433.8 455.4,435.8 457.8,437.8 458.6,439.8 459.8,441.0 460.2,443.0 461.4,444.6 461.8,447.0 462.6,449.0 463.8,451.0 464.6,452.6 466.0,453.8 466.2,456.2 466.6,458.6 467.0,460.6 466.2,463.0 465.8,465.0 466.0,467.4 465.4,469.4 464.2,469.4 462.6,467.4 461.0,465.0 459.4,461.8 458.2,458.6 457.4,455.4 456.6,452.2 455.8,449.0 454.6,445.8 453.4,442.6 452.2,439.8 450.6,437.0 449.0,434.2 447.4,431.4"/>
<polygon fill="#bfcde4" points="457.6,438.1 459.3,438.9 461.7,438.1 464.9,437.7 468.1,436.5 470.9,434.9 470.5,432.5 471.3,429.3 473.7,427.6 476.1,426.0 478.5,424.4 481.7,424.9 484.9,424.4 488.1,424.0 491.3,422.8 493.7,422.0 496.1,422.8 496.6,426.0 495.3,430.1 492.9,434.1 491.3,436.5 490.5,439.7 491.3,442.9 490.5,446.1 491.3,450.9 488.9,452.2 486.5,453.3 485.7,456.5 483.3,459.7 481.7,462.1 478.5,463.7 476.1,465.3 474.5,468.5 472.9,470.9 469.7,472.5 467.3,471.7 465.4,469.4 466.0,467.4 465.8,465.0 466.2,463.0 467.0,460.6 466.6,458.6 466.2,456.2 466.0,453.8 464.6,452.6 463.8,451.0 462.6,449.0 461.8,447.0 461.4,444.6 460.2,443.0 459.8,441.0 458.6,439.8 457.8,437.8"/>
<polygon fill="#ccd7eb" points="468.1,397.2 471.3,396.5 474.5,397.3 477.7,396.5 480.9,395.7 484.1,394.9 487.3,393.3 489.7,391.7 492.9,390.9 495.3,389.3 498.5,388.5 500.1,386.1 503.3,384.5 506.5,382.9 507.8,380.9 507.6,380.5 510.0,378.1 514.0,375.7 517.2,374.1 519.6,374.9 522.0,373.3 524.4,371.7 527.6,370.9 530.9,370.1 534.1,369.3 536.5,368.0 534.9,370.1 532.5,372.5 529.3,374.9 526.0,377.3 522.8,379.7 519.6,382.1 516.4,384.5 514.8,387.7 513.2,390.1 510.8,392.5 507.6,394.9 504.4,397.3 514.5,391.6 509.7,394.0 504.9,396.4 502.5,398.8 499.3,399.6 496.9,402.0 495.3,406.0 494.5,410.8 495.0,416.4 495.3,420.4 496.1,422.8 493.7,422.0 491.3,422.8 488.1,424.0 484.9,424.4 481.7,424.9 478.5,424.4 477.7,422.0 475.3,419.6 472.9,417.2 469.7,416.4 468.1,414.0 465.7,413.2 464.9,410.0 464.1,406.8 466.5,404.4 467.3,400.4"/>
<polygon fill="#d7e1f1" points="521.2,320.4 524.4,316.4 526.0,314.8 526.8,319.6 529.3,324.4 530.9,329.2 530.9,334.0 528.5,335.6 526.8,338.8 525.2,342.0 523.6,346.0 520.4,347.6 517.2,349.3 515.6,351.7 516.4,355.7 518.0,358.9 516.4,360.5 514.0,358.9 512.4,361.3 513.2,365.3 514.0,369.3 512.4,371.7 510.0,374.9 508.4,378.1 507.6,380.5 504.9,378.9 502.5,376.5 500.1,373.3 497.7,370.9 495.3,370.1 498.0,367.7 501.7,363.7 499.9,361.3 500.4,358.1 499.6,355.7 499.9,351.7 500.4,347.6 499.6,343.6 501.2,340.4 502.8,337.2 505.2,334.8 508.4,332.4 510.8,330.0 512.4,326.8 511.6,323.6 510.0,322.0 513.2,320.4 516.4,319.6 519.6,320.4"/>
<polygon fill="#d9e2f2" points="530.9,334.0 534.1,334.8 537.3,334.0 540.5,335.6 543.7,338.0 546.9,336.4 550.1,334.8 553.3,335.6 554.9,337.2 557.3,339.6 560.5,341.2 562.9,340.4 564.5,342.0 560.5,342.8 557.3,344.4 555.7,347.6 556.5,350.9 554.1,354.1 550.9,357.3 546.9,359.7 542.9,362.1 539.7,364.5 537.3,366.9 536.5,368.0 534.1,369.3 530.9,370.1 527.6,370.9 524.4,371.7 522.0,373.3 519.6,374.9 517.2,374.1 514.0,375.7 510.0,378.1 508.4,378.1 510.0,374.9 512.4,371.7 514.0,369.3 513.2,365.3 512.4,361.3 514.0,358.9 516.4,360.5 518.0,358.9 516.4,355.7 515.6,351.7 517.2,349.3 520.4,347.6 523.6,346.0 525.2,342.0 526.8,338.8 528.5,335.6"/>
<polygon style="fill:var(--g,#e0e0e0)" points="524.6,315.8 527.0,315.0 529.8,315.4 532.6,315.8 535.0,315.4 538.2,314.6 541.4,313.8 544.6,312.2 547.0,312.6 549.4,314.6 551.8,313.8 554.2,312.6 556.6,310.6 557.8,308.6 559.8,307.4 562.2,307.8 563.4,309.0 563.7,311.4 562.6,313.8 561.0,316.2 558.6,318.6 556.6,320.6 554.2,322.6 551.0,324.2 548.6,325.4 547.0,326.2 549.4,328.2 551.8,330.0 553.3,330.5 554.9,333.7 554.1,336.1 550.9,335.3 547.7,334.0 546.1,336.9 542.9,337.7 540.5,335.3 537.3,333.7 534.1,334.5 530.9,333.7 532.0,330.5 530.9,327.3 529.3,324.1 527.2,320.9 525.6,317.7"/>
<polygon fill="#d7e1f1" points="529.0,286.6 532.2,287.0 534.6,289.0 535.8,291.4 539.0,292.6 542.2,293.0 544.2,294.2 547.0,294.6 550.2,295.0 553.4,295.8 556.6,295.4 559.8,295.8 563.0,295.4 564.2,295.4 563.0,298.2 562.9,300.6 564.0,302.2 564.5,304.2 563.0,306.0 562.6,307.8 562.2,307.8 559.8,307.4 557.8,308.6 556.6,310.6 554.2,312.6 551.8,313.8 549.4,314.6 547.0,312.6 544.6,312.2 541.4,313.8 538.2,314.6 535.0,315.4 532.6,315.8 529.8,315.4 527.0,315.0 524.6,315.8 524.6,313.4 523.8,311.0 524.6,308.6 527.0,306.6 529.8,304.6 532.2,303.0 534.2,302.2 530.6,298.2 529.4,295.4 531.4,293.0 529.8,289.8 529.0,287.4"/>
<polygon fill="#ccd7eb" points="564.2,289.0 566.3,288.6 568.3,289.0 570.3,288.6 571.5,289.8 573.1,291.4 574.7,292.0 577.1,292.4 579.1,292.6 580.3,293.0 580.2,295.0 579.7,296.9 578.1,297.8 576.7,298.8 575.1,297.8 573.9,296.4 572.3,295.9 571.1,295.9 569.5,295.1 567.9,295.1 566.9,295.9 566.1,296.7 565.1,297.4 564.2,298.6 564.0,300.6 564.8,302.2 566.3,303.0 568.3,304.2 570.3,305.4 571.5,306.6 569.5,307.0 567.9,307.4 567.1,309.0 565.5,309.0 564.8,310.6 564.0,312.6 565.1,313.8 567.1,315.4 569.5,317.0 570.3,319.4 570.7,321.8 571.5,324.2 572.3,326.6 572.5,330.0 573.3,335.3 574.1,340.1 572.5,340.9 570.9,338.5 569.3,340.9 567.7,339.3 566.1,340.9 564.5,341.7 562.9,340.1 560.5,340.9 557.3,339.3 554.9,336.9 554.9,333.7 553.3,330.5 551.8,330.0 549.4,328.2 547.0,326.2 548.6,325.4 551.0,324.2 554.2,322.6 556.6,320.6 558.6,318.6 561.0,316.2 562.6,313.8 563.7,311.4 563.4,309.0 562.6,307.8 563.0,306.0 564.5,304.2 564.0,302.2 562.9,300.6 563.0,298.2 564.2,295.4 563.8,292.2"/>
<polygon style="fill:var(--g,#e0e0e0)" points="565.3,280.0 568.5,279.2 570.1,281.6 569.8,285.6 570.1,289.3 565.3,288.8 564.0,285.6 564.5,282.4"/>
<polygon style="fill:var(--g,#e0e0e0)" points="580.0,292.6 581.2,291.4 583.2,290.6 585.2,291.4 587.6,291.2 590.0,291.0 592.4,290.6 594.8,290.8 597.2,290.4 600.0,288.2 598.4,287.8 598.0,285.8 597.2,284.2 595.6,283.4 594.0,283.0 593.6,281.8 594.8,281.0 596.4,281.8 598.4,280.6 600.8,281.0 602.8,279.0 603.2,277.0 605.6,275.8 607.6,274.6 608.0,272.2 610.8,271.8 613.2,271.4 614.0,269.0 615.6,267.0 618.0,265.0 620.0,266.2 622.4,266.6 624.8,267.0 626.0,265.0 628.0,263.4 630.1,263.0 631.3,264.6 632.1,267.0 633.3,267.0 634.5,268.6 633.3,270.6 632.1,271.5 634.5,271.7 637.0,272.1 639.9,273.0 642.1,274.5 641.7,276.6 639.7,277.7 637.7,276.9 635.7,275.7 633.3,274.8 630.9,274.7 629.0,275.7 628.8,277.0 628.0,278.6 628.8,280.6 630.1,282.2 628.4,283.0 627.2,284.2 626.0,285.8 624.4,287.0 624.0,289.4 624.4,291.8 623.6,294.2 624.0,296.2 623.6,298.6 623.7,298.2 622.5,299.4 621.3,299.0 620.1,300.2 618.0,300.6 615.6,301.4 613.6,302.2 611.6,303.4 610.4,304.6 609.6,306.6 608.8,309.0 608.3,311.4 608.4,313.8 607.6,315.8 606.4,315.0 605.2,314.2 603.6,315.4 602.0,315.0 601.6,316.6 601.2,319.0 600.0,320.2 598.8,321.0 597.6,322.6 597.2,324.6 596.8,326.6 595.6,327.0 594.0,325.4 593.2,323.8 592.3,321.8 592.4,319.8 593.6,317.8 595.6,317.0 597.6,316.2 599.2,315.0 600.4,313.4 600.8,311.8 601.6,309.8 602.8,308.2 603.2,306.6 602.0,306.0 598.8,306.2 595.6,306.6 592.4,306.2 589.2,306.5 586.0,306.2 583.2,306.5 580.8,305.4 580.0,303.8 580.4,301.0 579.4,298.2 579.6,295.4"/>
<polygon fill="#dae3f3" points="620.1,300.2 621.3,302.2 621.7,305.8 620.9,308.2 619.6,310.6 618.8,313.0 618.0,315.4 617.6,317.0 615.6,316.6 613.2,316.2 610.8,316.2 608.8,315.8 607.6,315.8 608.4,313.8 608.3,311.4 608.8,309.0 609.6,306.6 610.4,304.6 611.6,303.4 613.6,302.2 615.6,301.4 618.0,300.6"/>
<polygon fill="#dae3f3" points="602.0,315.8 603.6,315.6 605.2,314.5 606.4,315.3 607.6,316.1 609.2,316.6 610.8,317.4 611.2,319.4 610.8,321.8 611.2,324.2 610.4,325.8 609.6,327.8 609.2,330.0 608.4,332.2 607.2,334.6 606.0,335.1 604.8,333.4 604.0,330.0 603.2,327.4 602.8,325.0 602.4,322.6 602.0,320.2 601.9,317.8"/>
</g><g stroke-width="0.6" fill="none" style="stroke:var(--s,#f4f4f4)">
<polyline points="580.8,301.4 583.2,300.2 586.0,299.8 589.2,299.4 592.4,299.0 595.2,297.8 598.0,297.8 600.0,298.2 600.4,299.8 602.0,300.6 603.6,302.2 604.4,304.2 603.2,306.2"/>
<polyline points="610.4,304.6 611.2,302.6 612.8,300.6 614.0,298.6 615.2,296.2 616.8,293.8 618.8,291.8 621.3,289.8 623.7,288.6 625.3,286.6"/>
<polyline points="600.0,288.2 602.4,287.4 604.8,287.8 607.6,288.2 610.4,287.8 612.4,286.6 614.0,284.2 615.6,281.8 617.6,280.6 620.0,279.4 622.4,277.8 624.8,276.2 626.8,274.6 628.8,273.4 630.5,274.1"/>
<polyline points="593.6,317.8 595.6,317.0 597.6,316.2 599.2,315.0 600.8,313.8 601.6,316.6"/>
</g><g fill="#e9e9e9" stroke="none"><path d="M611.2 418.5L612.4 418.2L612.2 424.6L611.6 431L610.6 437.6L610 437.4L610.6 430Z" opacity="0.8"/><path d="M610.2 441.2L611 441L610.8 446L610 446Z" opacity="0.7"/><path d="M612.6 456L613.2 456L613 459L612.4 459Z" opacity="0.5"/><path d="M618 467.6L619.4 468.4L620.6 470.4L619.8 470.8Z" opacity="0.4"/></g></g></svg>
<div class="abs" id="ctitle" style="left:438.4px;top:189.6px;width:200px;text-align:center;font-size:11.9px;line-height:15px;color:#595959;letter-spacing:0.3px">Chart Title</div>
<div class="abs" style="left:744.8px;top:215.4px;font-size:7.5px;line-height:9px;color:#595959">Series1</div>
<div class="abs" style="left:748.3px;top:234px;width:6.6px;height:62.5px;background:linear-gradient(#2f5597,#dae3f3)"></div>
<div class="abs" style="left:759.4px;top:228.8px;font-size:7.5px;line-height:9px;color:#595959">121</div>
<div class="abs" style="left:759.4px;top:292.2px;font-size:7.5px;line-height:9px;color:#595959">1</div>
<div class="abs" style="left:590px;top:468.6px;width:145px;text-align:right;font-size:5.15px;line-height:7.5px;color:#3a3a3a">Powered by Bing<br>© GeoNames, HERE, MSFT, Microsoft, Wikipedia</div>
<div class="abs" style="left:290.8px;top:179.7px;width:7.2px;height:7.2px;border-radius:50%;background:#fff;border:1px solid #858585"></div>
<div class="abs" style="left:534.8px;top:179.7px;width:7.2px;height:7.2px;border-radius:50%;background:#fff;border:1px solid #858585"></div>
<div class="abs" style="left:778.7px;top:179.7px;width:7.2px;height:7.2px;border-radius:50%;background:#fff;border:1px solid #858585"></div>
<div class="abs" style="left:290.8px;top:332.1px;width:7.2px;height:7.2px;border-radius:50%;background:#fff;border:1px solid #858585"></div>
<div class="abs" style="left:778.7px;top:332.1px;width:7.2px;height:7.2px;border-radius:50%;background:#fff;border:1px solid #858585"></div>
<div class="abs" style="left:290.8px;top:484.6px;width:7.2px;height:7.2px;border-radius:50%;background:#fff;border:1px solid #858585"></div>
<div class="abs" style="left:534.8px;top:484.6px;width:7.2px;height:7.2px;border-radius:50%;background:#fff;border:1px solid #858585"></div>
<div class="abs" style="left:778.7px;top:484.6px;width:7.2px;height:7.2px;border-radius:50%;background:#fff;border:1px solid #858585"></div>
<div class="abs" style="left:792.2px;top:182.2px;width:20.3px;height:20.4px;background:#fff;border:0.7px solid #c3c3c3"></div>
<svg class="abs" style="left:792.2px;top:182.2px" width="20.5" height="20.5" viewBox="0 0 20.5 20.5"><path d="M9.7 2.8V17.6M2.2 10.2H17.2" stroke="#62b474" stroke-width="1" fill="none"/></svg>
<div class="abs" style="left:792.2px;top:210.3px;width:20.3px;height:20.4px;background:#fff;border:0.7px solid #c3c3c3"></div>
<svg class="abs" style="left:792.2px;top:210.3px" width="20.5" height="20.5" viewBox="0 0 20.5 20.5"><path d="M16.82 2.43Q18.9 1.6 18.58 3.77L11.28 13.37L9.52 12.03Z" fill="#fff" stroke="#444" stroke-width="0.8" stroke-linejoin="round"/><path d="M9.5 11.8L11.5 13.5C10.6 16.8 6.8 18.2 1.6 16.5C3.6 15.9 4.2 14.8 4.8 13.6C5.6 11.7 7.6 11.1 9.5 11.8Z" fill="#2f86d8"/></svg>
</div>
<div class="abs" style="left:983.4px;top:151px;width:15.6px;height:346px;background:#e6e6e6"></div>
<div class="abs" style="left:983px;top:151px;width:0.8px;height:345.4px;background:#b4b4b4"></div>
<div class="abs" style="left:986.2px;top:164px;width:10.4px;height:322px;background:#cdcdcd"></div>
<div class="abs" style="left:986.2px;top:153.2px;width:10.4px;height:10.4px;background:#fff;border:0.7px solid #ababab"></div>
<div class="abs" style="left:986.2px;top:164.4px;width:10.4px;height:260.4px;background:#fff;border:0.7px solid #ababab"></div>
<div class="abs" style="left:986.2px;top:485.8px;width:10.4px;height:10.4px;background:#fff;border:0.7px solid #ababab"></div>
<svg class="abs" style="left:983px;top:151px" width="16" height="346" viewBox="983 151 16 346"><path d="M988.8 160L991.4 156.8L994 160Z" fill="#555"/><path d="M988.8 489.6L991.4 492.8L994 489.6Z" fill="#555"/></svg>
<div id="tabbar">
<div class="abs" style="left:0;top:1.3px;width:984px;height:0.8px;background:#b4b4b4"></div>
<div class="abs" style="left:73.3px;top:1.3px;width:48px;height:17.5px;background:#fff;border-bottom:1.4px solid #217346"></div>
<div class="abs" style="left:73.3px;top:4.5px;width:48px;text-align:center;font-size:9px;font-weight:bold;color:#217346;line-height:12px;letter-spacing:0">Sheet1</div>
<div class="abs" style="left:124px;top:4.5px;width:41px;text-align:center;font-size:9px;color:#444;line-height:12px">Sheet2</div>
<div class="abs" style="left:167px;top:5px;width:0.8px;height:13px;background:#ababab"></div>
<svg class="abs" style="left:0;top:0" width="999" height="21" viewBox="0 495 999 21"><path d="M22.2 503.4L19.8 506L22.2 508.6" fill="#c6c6c6"/><path d="M41 503.4L43.4 506L41 508.6" fill="#c6c6c6"/><circle cx="197.7" cy="506.2" r="5.3" fill="none" stroke="#6a6a6a" stroke-width="0.8"/><path d="M194.7 506.2H200.7M197.7 503.2V509.2" stroke="#6a6a6a" stroke-width="0.9"/><circle cx="599.6" cy="503.2" r="0.6" fill="#8a8a8a"/><circle cx="599.6" cy="505.8" r="0.6" fill="#8a8a8a"/><circle cx="599.6" cy="508.4" r="0.6" fill="#8a8a8a"/></svg>
<div class="abs" style="left:621.5px;top:5.7px;width:352px;height:11px;background:#cdcdcd"></div>
<div class="abs" style="left:611.8px;top:5.7px;width:10px;height:11px;background:#fff;border:0.7px solid #ababab"></div>
<div class="abs" style="left:621.8px;top:5.7px;width:329.6px;height:11px;background:#fff;border:0.7px solid #ababab"></div>
<div class="abs" style="left:972.8px;top:5.7px;width:10.6px;height:11px;background:#fff;border:0.7px solid #ababab"></div>
<svg class="abs" style="left:0;top:0" width="999" height="21" viewBox="0 495 999 21"><path d="M618.4 503.6L615.2 506.2L618.4 508.8Z" fill="#555"/><path d="M976.6 503.6L979.8 506.2L976.6 508.8Z" fill="#555"/></svg>
</div>
<div id="status">
<div class="abs" style="left:0;top:0;width:999px;height:0.8px;background:#dedede"></div>
<div class="abs" style="left:779.7px;top:1px;width:28.6px;height:15.5px;background:#d2d0ce"></div>
<svg class="abs" style="left:0;top:0" width="999" height="17" viewBox="0 516 999 17"><path d="M789.4 520H798.2V528.6H789.4ZM789.4 522.9H798.2M789.4 525.8H798.2M792.3 520V528.6M795.3 520V528.6" stroke="#333" stroke-width="0.9" fill="none"/><path d="M819.2 520H828.2V528.6H819.2Z M821.4 521.8H826V526.8H821.4Z M823.7 521.8V526.8" stroke="#555" stroke-width="0.7" fill="none"/><path d="M847.6 520H856.8V528.6H847.6Z M850.6 520V524.6H854V520 M847.6 524.6H856.8" stroke="#555" stroke-width="0.7" fill="none"/><path d="M871.6 524.4H876.8" stroke="#555" stroke-width="0.8"/><path d="M881.7 524.4H954.2" stroke="#8a8a8a" stroke-width="0.7"/><rect x="916.6" y="520" width="3" height="8.8" fill="#5a5a5a"/><path d="M957.4 524.4H963.4M960.4 521.4V527.4" stroke="#555" stroke-width="0.8"/></svg>
<div class="abs" style="left:974px;top:3px;font-size:8.5px;line-height:11px;color:#444;transform-origin:0 50%;transform:scaleX(.89)">100%</div>
</div>
<div id="task">
<div class="abs" style="left:0;top:-1px;width:999px;height:30px;background:#101b26"></div>
<div class="abs" style="left:0;top:-1px;width:35px;height:30px;background:#0a121a"></div>
<div class="abs" style="left:35px;top:-1px;width:251.6px;height:30px;background:#f3f3f3;border-top:0.8px solid #dcdcdc"></div>
<div class="abs" style="left:64.4px;top:9px;font-size:10.6px;line-height:13px;color:#3c3c3c">Type here to search</div>
<div class="abs" style="left:434.8px;top:-1px;width:28.6px;height:30px;background:#3b4a3e"></div>
<div class="abs" style="left:539.4px;top:-1px;width:33.8px;height:30px;background:#343f49"></div>
<div class="abs" style="left:327px;top:27.6px;width:28.0px;height:1.4px;background:#76b9ed"></div>
<div class="abs" style="left:362.7px;top:27.6px;width:29.3px;height:1.4px;background:#76b9ed"></div>
<div class="abs" style="left:434.8px;top:27.6px;width:28.6px;height:1.4px;background:#a7e29a"></div>
<div class="abs" style="left:506px;top:27.6px;width:24.0px;height:1.4px;background:#76b9ed"></div>
<div class="abs" style="left:539.4px;top:27.6px;width:33.8px;height:1.4px;background:#8fc8f3"></div>
<svg class="abs" style="left:0;top:-1px" width="999" height="30" viewBox="0 532 999 30"><g transform="translate(0,0.7)">
<path d="M11.6 542.3L16.6 541.6V546H11.6ZM17.4 541.5L24 540.6V546H17.4ZM11.6 546.8H16.6V551.2L11.6 550.5ZM17.4 546.8H24V552.2L17.4 551.3Z" fill="#fff"/>
<circle cx="49.6" cy="546.7" r="6.6" fill="none" stroke="#111" stroke-width="1.9"/>
<rect x="269.2" y="540.6" width="3.6" height="7" rx="1.8" fill="none" stroke="#333" stroke-width="0.8"/><path d="M267.6 546.4C267.6 551 274.4 551 274.4 546.4M271 549.8V552.2M269 552.4H273" stroke="#333" stroke-width="0.8" fill="none"/>
<path d="M299.4 543H306.6V550.4H299.4Z M299.4 541.2V542M306.6 541.2V542M299.4 551.4V552.2M306.6 551.4V552.2 M309.2 544.4V550.4" stroke="#fff" stroke-width="0.9" fill="none"/><circle cx="309.2" cy="542" r="0.7" fill="#fff"/>
<path d="M334.4 547.6C334.2 542.6 337.4 540 341.4 540C346 540 348.4 543.2 348.2 547.4H338.6C338.8 550 341 551.2 343.4 551.2C345 551.2 346.6 550.8 347.8 550V552.8C346.4 553.6 344.6 554 342.6 554C337.6 554 334.6 551.4 334.4 547.6ZM338.6 545.2H344.4C344.4 543.6 343.4 542.4 341.6 542.4C340 542.4 338.8 543.6 338.6 545.2Z" fill="#2f8fe6"/>
<path d="M369.6 541.4H375L376.4 542.8H384.4V552.4H369.6Z" fill="#f6c945"/><path d="M369.6 544.6H384.4V552.4H369.6Z" fill="#fbe08a"/><path d="M373.6 548.4H380.4V552.4H373.6Z" fill="#4aa3e8"/><path d="M375 550H379V552.4H375Z" fill="#fbe08a"/>
<path d="M405.8 541.6H420.8V552.6H405.8Z" fill="#2b8fe3"/><path d="M405.8 541.8L413.3 547.6L420.8 541.8" stroke="#fff" stroke-width="1" fill="#55aef0"/><path d="M405.8 552.6L411.6 546.8M420.8 552.6L415 546.8" stroke="#fff" stroke-width="0.6" fill="none" opacity="0.6"/>
<circle cx="448.6" cy="546.6" r="7" fill="#e33b2e"/><path d="M448.6 546.6L442.5 543.1A7 7 0 0 0 445.1 552.66Z" fill="#2ba24c"/><path d="M448.6 546.6L445.1 552.66A7 7 0 0 0 454.7 550.1A7 7 0 0 0 455.6 546.6Z" fill="#fbc116"/><path d="M448.6 546.6L442.5 543.1L445.1 552.66L448.6 553.6Z" fill="#2ba24c"/><path d="M448.6 553.6A7 7 0 0 0 455.3 544.6H448.6Z" fill="#fbc116"/><circle cx="448.6" cy="546.6" r="3.2" fill="#fff"/><circle cx="448.6" cy="546.6" r="2.5" fill="#4486f4"/>
<path d="M477.6 543.8H490.6V553.6H477.6Z" fill="#fff"/><path d="M481.2 543.8V542.4C481.2 540 487 540 487 542.4V543.8" stroke="#fff" stroke-width="0.9" fill="none"/><rect x="480.8" y="545.6" width="3" height="3" fill="#f25022"/><rect x="484.4" y="545.6" width="3" height="3" fill="#7fba00"/><rect x="480.8" y="549.2" width="3" height="3" fill="#00a4ef"/><rect x="484.4" y="549.2" width="3" height="3" fill="#ffb900"/>
<circle cx="521.6" cy="546.4" r="6.6" fill="#ed6c47"/><path d="M521.6 539.8A6.6 6.6 0 0 1 528.2 546.4H521.6Z" fill="#ff8f6b"/><path d="M521.6 546.4H528.2A6.6 6.6 0 0 1 521.6 553Z" fill="#d35230"/><rect x="512.4" y="542" width="9" height="9" rx="0.8" fill="#c43e1c"/><path d="M515.4 549V544H517.4C519.4 544 519.4 546.8 517.4 546.8H515.4" stroke="#fff" stroke-width="0.9" fill="none"/>
<rect x="551" y="540" width="11.6" height="13" rx="0.8" fill="#21a366"/><rect x="551" y="540" width="5.8" height="6.5" fill="#107c41"/><rect x="556.8" y="540" width="5.8" height="6.5" fill="#33c481"/><rect x="551" y="546.5" width="5.8" height="6.5" fill="#185c37"/><rect x="547.2" y="542.2" width="8.8" height="8.8" rx="0.8" fill="#107c41"/><path d="M549.8 544.4L553.4 548.8M553.4 544.4L549.8 548.8" stroke="#fff" stroke-width="1" fill="none"/>
<circle cx="592.2" cy="546.6" r="4.2" fill="none" stroke="#fff" stroke-width="2.2" stroke-dasharray="2.2 1.1"/><circle cx="592.2" cy="546.6" r="3.4" fill="none" stroke="#fff" stroke-width="1.5"/>
<circle cx="806.6" cy="546.6" r="1.6" fill="none" stroke="#fff" stroke-width="0.8"/><path d="M803.6 551.8C803.6 548.4 809.6 548.4 809.6 551.8" stroke="#fff" stroke-width="0.8" fill="none"/><circle cx="811" cy="543.4" r="1.3" fill="none" stroke="#fff" stroke-width="0.7"/><path d="M809.4 547C810 545.4 813 545.6 813.4 547.4" stroke="#fff" stroke-width="0.7" fill="none"/>
<path d="M830 548.6L833.8 544.8L837.6 548.6" stroke="#fff" stroke-width="0.9" fill="none"/>
<rect x="847.6" y="544" width="8.2" height="5" fill="none" stroke="#fff" stroke-width="0.8"/><rect x="848.6" y="545" width="3.6" height="3" fill="#fff"/><path d="M856.6 545.4V547.6" stroke="#fff" stroke-width="0.9"/>
<path d="M865.4 549.6C863.2 549.6 863.2 546.6 865.4 546.4C865.6 543.6 869.8 543.2 870.6 545.6C873.4 545.2 873.8 549.6 871 549.6Z" fill="#d8d8d8"/><circle cx="872" cy="549.6" r="2.2" fill="#8a8a8a"/>
<path d="M883.6 545.2H885.4L888 542.8V550.6L885.4 548.2H883.6Z" fill="none" stroke="#fff" stroke-width="0.8"/><path d="M889.6 544.8C890.8 546 890.8 547.6 889.6 548.8M891.2 543.4C893.2 545.4 893.2 548.2 891.2 550.2" stroke="#fff" stroke-width="0.7" fill="none"/>
<path d="M901.4 551.4L909.8 543M903 551.6C903 547 906 544.4 910 544.2M905.4 551.6C905.6 548.8 907.6 546.8 910 546.8M907.8 551.6C908 550.2 909 549.4 910 549.4" stroke="#fff" stroke-width="0.8" fill="none" opacity="0.85"/>
<path d="M969.6 541.6H981V550H974L971.6 552.4V550H969.6Z" fill="none" stroke="#fff" stroke-width="0.9"/><path d="M971.6 544.2H979M971.6 546.6H979" stroke="#fff" stroke-width="0.7"/><circle cx="980" cy="551.4" r="3.8" fill="#101b26" stroke="#fff" stroke-width="0.8"/>
<path d="M996.4 532V562" stroke="#56606a" stroke-width="0.6"/>
</g></svg>
<div class="abs" style="left:915px;top:1.6px;width:44px;text-align:center;font-size:8.6px;line-height:11px;color:#fff">7:11 PM</div>
<div class="abs" style="left:912px;top:14.6px;width:50px;text-align:center;font-size:8.6px;line-height:11px;color:#fff">3/26/2020</div>
<div class="abs" style="left:977.8px;top:13.6px;font-size:6.6px;line-height:8px;color:#fff;font-weight:bold">2</div>
</div>
<div class="abs" style="left:784.5px;top:475.5px;font-size:14.9px;line-height:17px;color:rgba(120,120,120,0.55);white-space:nowrap;letter-spacing:-0.2px">Activate Windows</div>
<div class="abs" style="left:785px;top:494.5px;font-size:10.9px;line-height:13px;color:rgba(120,120,120,0.55);white-space:nowrap;letter-spacing:0">Go to Settings to activate Windows.</div>
</body></html>
